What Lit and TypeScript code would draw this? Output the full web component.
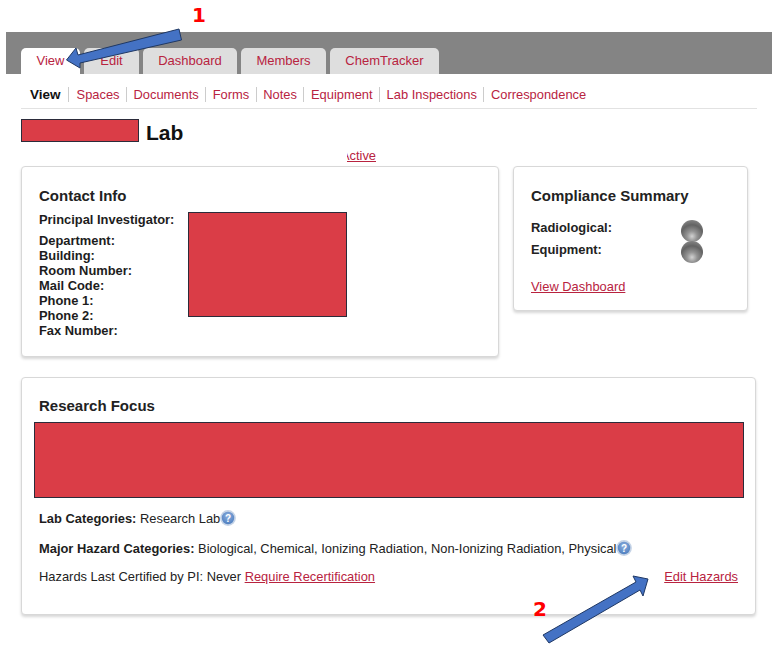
import { LitElement, html, css, svg } from "lit";
import { customElement } from "lit/decorators.js";

const TABS = ["View", "Edit", "Dashboard", "Members", "ChemTracker"];
const SUB = ["Spaces", "Documents", "Forms", "Notes", "Equipment", "Lab Inspections", "Correspondence"];
const CONTACT = ["Department:", "Building:", "Room Number:", "Mail Code:", "Phone 1:", "Phone 2:", "Fax Number:"];

const help = html`<svg class="help" viewBox="0 0 16 16" width="16" height="16">
  <defs><radialGradient id="hg" cx="50%" cy="35%" r="65%"><stop offset="0" stop-color="#8fb0de"/><stop offset="1" stop-color="#4f7fc0"/></radialGradient></defs>
  <circle cx="8" cy="8" r="7.9" fill="#c5d3e6"/><circle cx="8" cy="8" r="6.2" fill="url(#hg)"/>
  <text x="8" y="11.5" text-anchor="middle" font-size="10" font-weight="700" font-family="Liberation Sans" fill="#fff">?</text></svg>`;

@customElement("app-root")
export class AppRoot extends LitElement {
  static styles = css`
    :host { display: block; position: relative; width: 778px; height: 650px; background: #fff; overflow: hidden;
      font-family: "Liberation Sans", Arial, sans-serif; font-size: 12.9px; color: #222; }
    a { color: #b8233f; }
    .page { padding: 32px 6px 0 6px; }
    .tabbar { background: #848484; height: 42px; display: flex; align-items: flex-end; padding-left: 15px; gap: 4px; }
    .tab { height: 26px; box-sizing: border-box; padding-bottom: 2px; background: #dedede; border-radius: 5px 5px 0 0; display: flex; align-items: center; justify-content: center; color: #b8233f; font-size: 13px; }
    .tab.on { background: #fff; }
    .content { padding: 0 15px; }
    .sub { display: flex; align-items: center; box-sizing: border-box; height: 35px; padding-top: 6px; border-bottom: 1px solid #e2e2e2; padding-left: 9px; font-size: 12.9px; }
    .sub span { color: #b8233f; padding: 0 6.5px; border-left: 1px solid #ccc; line-height: 15px; }
    .sub span.cur { color: #111; font-weight: 700; border-left: 0; padding: 0 7px 0 0; font-size: 13.5px; }
    .sub span.cur + span { padding-left: 8px; }
    .title { display: flex; align-items: flex-start; gap: 7px; margin-top: 10px; height: 24px; font-size: 21px; font-weight: 700; color: #111; }
    .title span { line-height: 28px; }
    .redact { background: #da3d47; border: 1px solid #2b2b3a; box-sizing: border-box; }
    .activeRow { box-sizing: border-box; height: 23px; padding: 1px 0 0 326px; display: flex; align-items: center; }
    .clip { width: 29px; overflow: hidden; display: flex; justify-content: flex-end; }
    .cards { display: flex; align-items: flex-start; gap: 14px; }
    .card { background: #fff; border: 1px solid #d8d8d8; border-radius: 4px; box-shadow: 0 2px 3px rgba(0,0,0,.16); box-sizing: border-box; }
    h2 { margin: 0; font-size: 15px; font-weight: 700; color: #222; line-height: 18px; }
    .contact { width: 478px; height: 191px; padding: 20px 17px; }
    .cols { display: flex; gap: 14px; margin-top: 7px; }
    .labels { font-weight: 700; line-height: 15px; color: #1d1d1d; white-space: nowrap; }
    .labels .pi { margin-bottom: 6px; }
    .comp { width: 235px; height: 145px; padding: 20px 17px; }
    .lamps { display: grid; grid-template-columns: 150px 22px; grid-auto-rows: 21.5px; margin-top: 12px; font-weight: 700; }
    .lamps div { display: flex; align-items: center; }
    .ball { flex: none; width: 22px; height: 22px; border-radius: 50%; margin-top: 6px;
      background: radial-gradient(circle at 50% 74%, #d2d2d2 0, #939393 26%, #636363 58%, #808080 80%, #b8b8b8 100%); }
    .vd { margin-top: 19px; }
    .research { width: 735px; height: 238px; margin-top: 20px; padding: 19px 12px; }
    .research h2 { padding-left: 5px; }
    .rline { display: flex; align-items: center; padding-left: 5px; height: 16px; white-space: pre; }
    .foot { justify-content: space-between; padding-right: 5px; margin-top: 12px; }
    b { color: #1d1d1d; }
    .overlay { position: absolute; inset: 0; pointer-events: none; }
    .n { position: absolute; color: #f00; font-weight: 700; font-size: 20px; line-height: 24px; font-family: "DejaVu Sans", sans-serif; }
  `;
  render() {
    return html`<div class="page">
      <div class="tabbar">
        ${TABS.map((t, i) => html`<div class="tab ${i === 0 ? "on" : ""}" style="width:${[59, 55, 94, 85, 109][i]}px">${t}</div>`)}
      </div>
      <div class="content">
        <div class="sub"><span class="cur">View</span>${SUB.map((s) => html`<span>${s}</span>`)}</div>
        <div class="title"><div class="redact" style="width:118px;height:23px"></div><span>Lab</span></div>
        <div class="activeRow"><div class="clip"><a href="#">Active</a></div></div>
        <div class="cards">
          <div class="card contact">
            <h2>Contact Info</h2>
            <div class="cols">
              <div class="labels"><div class="pi">Principal Investigator:</div>${CONTACT.map((c) => html`<div>${c}</div>`)}</div>
              <div class="redact" style="width:159px;height:105px"></div>
            </div>
          </div>
          <div class="card comp">
            <h2>Compliance Summary</h2>
            <div class="lamps">
              <div>Radiological:</div><div><span class="ball"></span></div>
              <div>Equipment:</div><div><span class="ball"></span></div>
            </div>
            <div class="vd"><a href="#">View Dashboard</a></div>
          </div>
        </div>
        <div class="card research">
          <h2>Research Focus</h2>
          <div class="redact" style="width:710px;height:76px;margin-top:7px"></div>
          <div class="rline" style="margin-top:12px"><b>Lab Categories: </b>Research Lab${help}</div>
          <div class="rline" style="margin-top:14px"><b>Major Hazard Categories: </b>Biological, Chemical, Ionizing Radiation, Non-Ionizing Radiation, Physical${help}</div>
          <div class="rline foot"><span>Hazards Last Certified by PI: Never <a href="#">Require Recertification</a></span><a href="#">Edit Hazards</a></div>
        </div>
      </div>
      <div class="overlay">
        <div class="n" style="left:192px;top:3px">1</div>
        <div class="n" style="left:533px;top:597px">2</div>
        <svg width="778" height="650">
          ${svg`<path d="M66.5 60 L76 48 L78 55 L179 29 L181.5 40 L80 63 L80 68 Z" fill="#4472c4" stroke="#1f3864" stroke-width="1"/>
          <path d="M543 635 L636 582 L633 576 L648 579 L643 596 L640 590 L549 643 Z" fill="#4472c4" stroke="#1f3864" stroke-width="1"/>`}
        </svg>
      </div>
    </div>`;
  }
}
